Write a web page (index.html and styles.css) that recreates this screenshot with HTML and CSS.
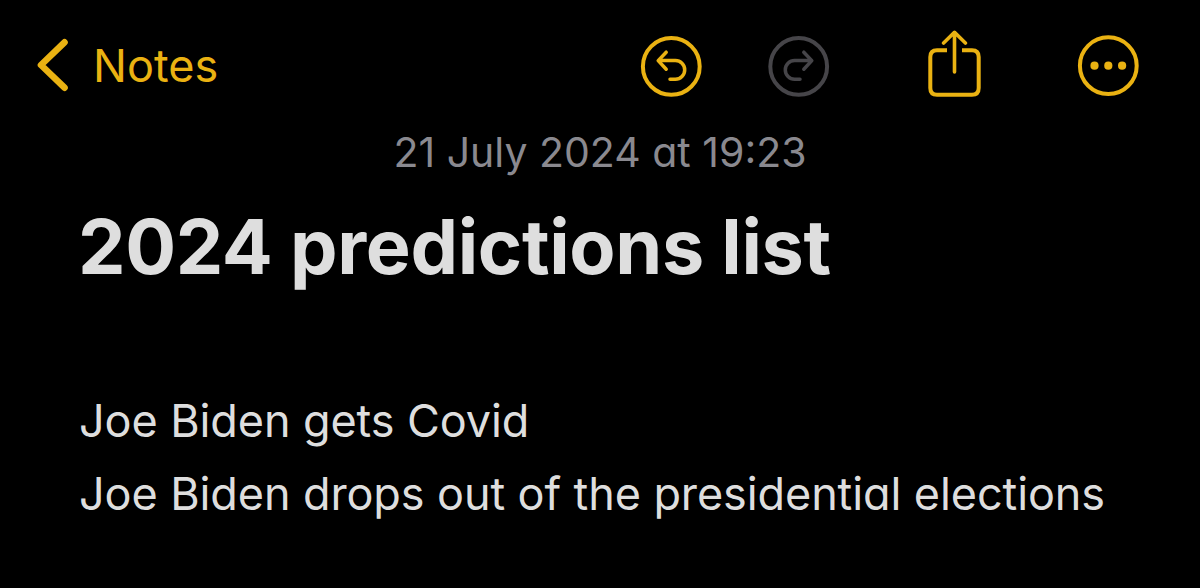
FILE: index.html
```
<!DOCTYPE html>
<html lang="en">
<head>
    <meta charset="UTF-8">
    <meta name="viewport" content="width=device-width, initial-scale=1.0">
    <title>Notes</title>
    <link rel="stylesheet" href="styles.css">
</head>
<body>
    <header class="toolbar">
        <a class="back" href="#">
            <svg width="34" height="58" viewBox="0 0 34 58" fill="none">
                <path d="M29.5 5.3L6 28L29.5 50.7" stroke="currentColor" stroke-width="6.6" stroke-linecap="round" stroke-linejoin="round"/>
            </svg>
            <span class="back-label">Notes</span>
        </a>
        <div class="actions">
            <button class="undo" aria-label="Undo">
                <svg width="62" height="62" viewBox="0 0 62 62" fill="none" stroke="currentColor" stroke-width="3.5" stroke-linecap="round" stroke-linejoin="round">
                    <circle cx="31.3" cy="31.4" r="28.4" stroke-width="4"/>
                    <path d="M26.2 17.2L18.2 25.6L26.2 34.2M19 25.6H35.4A9.3 9.3 0 0 1 35.4 44.2H30"/>
                </svg>
            </button>
            <button class="redo" aria-label="Redo" disabled>
                <svg width="62" height="62" viewBox="0 0 62 62" fill="none" stroke="currentColor" stroke-width="3.5" stroke-linecap="round" stroke-linejoin="round">
                    <circle cx="30.7" cy="31.4" r="28.4" stroke-width="4"/>
                    <path d="M35.8 17.2L43.8 25.6L35.8 34.2M43 25.6H26.6A9.3 9.3 0 0 0 26.6 44.2H32"/>
                </svg>
            </button>
            <button class="share" aria-label="Share">
                <svg width="56" height="72" viewBox="0 0 56 72" fill="none" stroke="currentColor" stroke-width="4">
                    <path d="M21 20.3H11Q4.3 20.3 4.3 27V58Q4.3 64.7 11 64.7H46Q52.7 64.7 52.7 58V27Q52.7 20.3 46 20.3H36"/>
                    <path d="M28.5 42V3M17.6 13L28.5 2.3L39.4 13" stroke-width="3.6" stroke-linecap="round" stroke-linejoin="round"/>
                </svg>
            </button>
            <button class="more" aria-label="More">
                <svg width="62" height="62" viewBox="0 0 62 62" fill="none">
                    <circle cx="31.3" cy="30.7" r="28.4" stroke="currentColor" stroke-width="4"/>
                    <g fill="currentColor">
                        <circle cx="17.5" cy="30.7" r="4.1"/>
                        <circle cx="31.3" cy="30.7" r="4.1"/>
                        <circle cx="45.1" cy="30.7" r="4.1"/>
                    </g>
                </svg>
            </button>
        </div>
    </header>
    <main class="note">
        <time class="note-date">21 July 2024 at 19:23</time>
        <h1>2024 predictions list</h1>
        <p>Joe Biden gets Covid</p>
        <p>Joe Biden drops out of the presidential elections</p>
    </main>
</body>
</html>
```
FILE: styles.css
```
:root {
    --bg-color: #000000;
    --accent-color: #EAB212;
    --text-color: #DEDEDE;
    --muted-color: #8A898F;
    --disabled-color: #464549;
}

body {
    font-family: Inter, "Liberation Sans", sans-serif;
    background-color: var(--bg-color);
    color: var(--text-color);
    margin: 0;
    height: 100vh;
    overflow: hidden;
}

.toolbar {
    display: flex;
    align-items: center;
    justify-content: space-between;
    height: 132px;
    padding: 0 61px 0 35px;
    box-sizing: border-box;
    color: var(--accent-color);
}

.back {
    display: flex;
    align-items: center;
    gap: 24px;
    color: inherit;
    font-size: 45px;
    text-decoration: none;
}

.back-label {
    padding-bottom: 2px;
}

.actions {
    display: flex;
    align-items: center;
}

svg {
    display: block;
}

button {
    padding: 0;
    background: none;
    border: none;
    color: inherit;
    cursor: pointer;
}

.redo {
    margin-left: 66px;
    color: var(--disabled-color);
}

.share {
    margin-left: 96px;
}

.more {
    margin-left: 95px;
}

.note {
    padding: 0 79px;
    white-space: nowrap;
}

/* single-storey "a", as in the Notes font */
.note-date,
p {
    font-feature-settings: "cv11";
}

.note-date {
    display: block;
    line-height: 40px;
    font-size: 41px;
    color: var(--muted-color);
    text-align: center;
}

h1 {
    margin: 29px 0 0 -1px;
    font-size: 75.5px;
    line-height: 92px;
    font-weight: 700;
    letter-spacing: -0.35px;
}

p {
    margin: 0;
    font-size: 45px;
    line-height: 73px;
    letter-spacing: -0.1px;
}

h1 + p {
    margin-top: 91px;
}
```
